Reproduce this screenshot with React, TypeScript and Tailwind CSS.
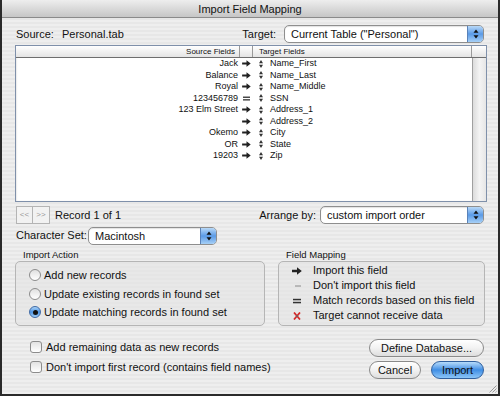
import React from "react";

const rows: { src: string; mark: "arrow" | "equal"; dst: string }[] = [
  { src: "Jack", mark: "arrow", dst: "Name_First" },
  { src: "Balance", mark: "arrow", dst: "Name_Last" },
  { src: "Royal", mark: "arrow", dst: "Name_Middle" },
  { src: "123456789", mark: "equal", dst: "SSN" },
  { src: "123 Elm Street", mark: "arrow", dst: "Address_1" },
  { src: "", mark: "arrow", dst: "Address_2" },
  { src: "Okemo", mark: "arrow", dst: "City" },
  { src: "OR", mark: "arrow", dst: "State" },
  { src: "19203", mark: "arrow", dst: "Zip" },
];

function Arrow({ w = 10, h = 8 }: { w?: number; h?: number }) {
  return (
    <svg width={w} height={h} viewBox="0 0 10 8">
      <path d="M0 2.8h5V0.3L9.8 4 5 7.7V5.2H0z" fill="#222" />
    </svg>
  );
}

function Equal({ w = 10, h = 8 }: { w?: number; h?: number }) {
  return (
    <svg width={w} height={h} viewBox="0 0 10 8">
      <rect x="1" y="1.8" width="8" height="1.5" fill="#333" />
      <rect x="1" y="4.8" width="8" height="1.5" fill="#333" />
    </svg>
  );
}

function UpDown() {
  return (
    <svg width="4" height="8" viewBox="0 0 4 8">
      <path d="M2 0L4 3.2H0z M0 4.8h4L2 8z" fill="#333" />
    </svg>
  );
}

function PopUp({ text, className }: { text: string; className: string }) {
  return (
    <div
      className={
        "h-[18px] flex rounded-[5px] border border-[#8e8e8e] bg-white shadow-[inset_0_1px_1px_rgba(0,0,0,0.12)] " +
        className
      }
    >
      <div className="flex-1 pl-[6px] text-[11px] leading-[16px] truncate">{text}</div>
      <div className="w-[16px] rounded-r-[4px] border-l border-[#5a82b8] bg-gradient-to-b from-[#b9d9f7] via-[#5a9ae6] to-[#a7d0f6] flex items-center justify-center">
        <svg width="6" height="10" viewBox="0 0 6 10">
          <path d="M3 0.5L5.5 3.8H0.5z M0.5 6.2h5L3 9.5z" fill="#111" />
        </svg>
      </div>
    </div>
  );
}

function Radio({ on, label }: { on?: boolean; label: string }) {
  return (
    <div className="h-[18.5px] flex items-center">
      {on ? (
        <div className="w-[12px] h-[12px] rounded-full border border-[#3f6aa6] bg-gradient-to-b from-[#a9d2f7] via-[#4b93e3] to-[#9fcdf7] flex items-center justify-center">
          <div className="w-[5px] h-[5px] rounded-full bg-[#111]" />
        </div>
      ) : (
        <div className="w-[12px] h-[12px] rounded-full border border-[#8c8c8c] bg-gradient-to-b from-[#e0e0e0] to-[#ffffff]" />
      )}
      <span className="ml-[3px] text-[11px]">{label}</span>
    </div>
  );
}

function Check({ label }: { label: string }) {
  return (
    <div className="h-[20px] flex items-center">
      <div className="w-[12px] h-[12px] rounded-[3px] border border-[#8c8c8c] bg-gradient-to-b from-[#e2e2e2] to-[#ffffff]" />
      <span className="ml-[4px] text-[11px]">{label}</span>
    </div>
  );
}

export default function App() {
  return (
    <div
      className="relative w-[500px] h-[396px] flex flex-col border-x-2 border-b-2 border-[#2a2a2a] text-[#111] bg-[repeating-linear-gradient(180deg,#eeeeee_0px,#eeeeee_2px,#e7e7e7_2px,#e7e7e7_4px)] overflow-hidden"
      style={{ fontFamily: '"Liberation Sans", Arial, sans-serif' }}
    >
      <div className="h-[18px] shrink-0 border-b border-[#8a8a8a] bg-gradient-to-b from-[#eeeeee] to-[#c6c6c6] text-center text-[11px] leading-[18px]">
        Import Field Mapping
      </div>

      <div className="flex-1 flex flex-col pl-[13px] pr-[11px]">
        {/* source / target */}
        <div className="mt-[6px] h-[20px] flex items-center text-[11px]">
          <span className="w-[47px] pl-[1px]">Source:</span>
          <span className="flex-1">Personal.tab</span>
          <span>Target:</span>
          <PopUp text={'Current Table ("Personal")'} className="ml-[8px] w-[200px] mr-[3px]" />
        </div>

        {/* field list */}
        <div className="mt-[1px] h-[157px] flex flex-col border border-[#7f90aa] bg-white shadow-[inset_0_1px_2px_rgba(0,0,0,0.25)]">
          <div className="h-[12px] shrink-0 flex border-b border-[#6e6e6e] bg-gradient-to-b from-white to-[#e4e4e4] text-[8px] leading-[11px]">
            <div className="w-[224px] text-right pr-[4px] border-r border-[#9a9a9a]">Source Fields</div>
            <div className="w-[13px] border-r border-[#9a9a9a]" />
            <div className="flex-1 pl-[6px] border-r border-[#9a9a9a]">Target Fields</div>
            <div className="w-[14px]" />
          </div>
          <div className="flex-1 flex">
            <div className="flex-1 pt-[0px]">
              {rows.map((r, i) => (
                <div key={i} className="h-[11.5px] flex items-center text-[9px]">
                  <div className="w-[224px] text-right pr-[2px]">{r.src}</div>
                  <div className="w-[13px] flex items-center justify-center">
                    {r.mark === "arrow" ? <Arrow w={9} h={7} /> : <Equal w={9} h={7} />}
                  </div>
                  <div className="flex-1 flex items-center pl-[6px]">
                    <UpDown />
                    <span className="ml-[7px]">{r.dst}</span>
                  </div>
                </div>
              ))}
            </div>
            <div className="w-[14px] border-l border-[#a0a0a0] bg-gradient-to-r from-[#dcdcdc] via-[#f4f4f4] to-[#e6e6e6]" />
          </div>
        </div>

        {/* record nav / arrange */}
        <div className="mt-[2px] h-[22px] flex items-center">
          <div className="ml-[1px] flex">
            <div className="w-[17px] h-[18px] border border-[#b4b4b4] bg-[#f2f2f2] text-[8px] text-[#999] flex items-center justify-center">
              &lt;&lt;
            </div>
            <div className="w-[17px] h-[18px] border border-l-0 border-[#b4b4b4] bg-[#f2f2f2] text-[8px] text-[#999] flex items-center justify-center">
              &gt;&gt;
            </div>
          </div>
          <span className="ml-[5px] text-[11px] flex-1">Record 1 of 1</span>
          <span className="text-[11px]">Arrange by:</span>
          <PopUp text="custom import order" className="ml-[4px] w-[164px] mr-[3px]" />
        </div>

        {/* character set */}
        <div className="h-[19px] flex items-center">
          <span className="w-[73px] pl-[1px] text-[11px]">Character Set:</span>
          <PopUp text="Macintosh" className="w-[129px]" />
        </div>

        {/* groups */}
        <div className="mt-[4px] flex">
          <div className="w-[250px]">
            <div className="h-[12px] pl-[8px] text-[9.5px] leading-[12px]">Import Action</div>
            <div className="h-[65px] rounded-[5px] border border-[#b5b5b5] bg-[#e4e4e4]/60 pt-[4px] pl-[13px]">
              <Radio label="Add new records" />
              <Radio label="Update existing records in found set" />
              <Radio on label="Update matching records in found set" />
            </div>
          </div>
          <div className="ml-[13px] w-[207px]">
            <div className="h-[12px] pl-[8px] text-[9.5px] leading-[12px]">Field Mapping</div>
            <div className="h-[65px] rounded-[5px] border border-[#b5b5b5] bg-[#e4e4e4]/60 pt-[1px] pl-[13px] text-[11px]">
              <div className="h-[15px] flex items-center">
                <div className="w-[10px] flex justify-center"><Arrow /></div>
                <span className="ml-[11px]">Import this field</span>
              </div>
              <div className="h-[15px] flex items-center">
                <div className="w-[10px] flex justify-center">
                  <svg width="10" height="8" viewBox="0 0 10 8">
                    <rect x="3" y="3.5" width="6" height="1" fill="#8a8a8a" />
                  </svg>
                </div>
                <span className="ml-[11px]">Don't import this field</span>
              </div>
              <div className="h-[15px] flex items-center">
                <div className="w-[10px] flex justify-center"><Equal /></div>
                <span className="ml-[11px]">Match records based on this field</span>
              </div>
              <div className="h-[15px] flex items-center">
                <div className="w-[10px] flex justify-center">
                  <svg width="10" height="8" viewBox="0 0 10 8">
                    <path d="M2 0.5L8 7.5M8 0.5L2 7.5" stroke="#d42a2a" strokeWidth="1.8" />
                    <circle cx="5" cy="4" r="1" fill="#666" />
                  </svg>
                </div>
                <span className="ml-[11px]">Target cannot receive data</span>
              </div>
            </div>
          </div>
        </div>

        {/* bottom */}
        <div className="flex">
          <div className="mt-[11px] pl-[15px]">
            <Check label="Add remaining data as new records" />
            <Check label="Don't import first record (contains field names)" />
          </div>
          <div className="ml-auto mr-[3px] mt-[13px] flex flex-col items-end">
            <button className="w-[115px] h-[18px] rounded-full border border-[#8a8a8a] bg-gradient-to-b from-white via-[#f2f2f2] to-[#dedede] text-[11px] leading-[16px]">
              Define Database...
            </button>
            <div className="mt-[4px] flex">
              <button className="w-[52px] h-[18px] rounded-full border border-[#8a8a8a] bg-gradient-to-b from-white via-[#f2f2f2] to-[#dedede] text-[11px] leading-[16px]">
                Cancel
              </button>
              <button className="ml-[10px] w-[53px] h-[18px] rounded-full border border-[#2f5f9e] bg-gradient-to-b from-[#b6dbfa] via-[#3f8ee4] to-[#8cc6f8] text-[11px] leading-[16px]">
                Import
              </button>
            </div>
          </div>
        </div>
      </div>

      {/* resize grip */}
      <svg className="absolute right-[1px] bottom-[1px]" width="10" height="10" viewBox="0 0 10 10">
        <path d="M9.5 2.5L2.5 9.5M9.5 5.5L5.5 9.5M9.5 8.5L8.5 9.5" stroke="#9a9a9a" strokeWidth="1" />
      </svg>
    </div>
  );
}
